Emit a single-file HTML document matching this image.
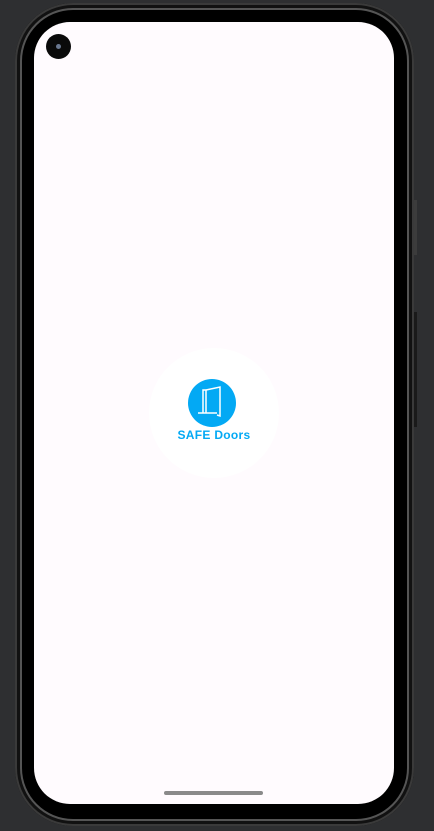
<!DOCTYPE html>
<html><head><meta charset="utf-8"><style>
html,body{margin:0;padding:0;width:434px;height:831px;overflow:hidden;background:#2e2f31;}
.frame{position:absolute;left:15px;top:3px;width:399px;height:823px;border-radius:58px;background:#000;box-shadow:inset 0 0 0 2px #3a3a3a, inset 0 0 0 5px #111, inset 0 0 0 7px #555, inset 0 0 0 9px #000;}
.screen{position:absolute;left:34px;top:22px;width:360px;height:782px;border-radius:36px;background:#fffbfe;overflow:hidden;}
.cam{position:absolute;left:46px;top:34px;width:25px;height:25px;border-radius:50%;background:#0a0a0a;}
.cam i{position:absolute;left:10px;top:10px;width:5px;height:5px;border-radius:50%;background:#6a7890;}
.btn{position:absolute;background:#222;}
.halo{position:absolute;left:149px;top:348px;width:130px;height:130px;border-radius:50%;background:#fff;}
.logo{position:absolute;left:188px;top:379px;width:48px;height:48px;border-radius:50%;background:#03a9f4;}
.txt{position:absolute;left:150px;top:428px;width:128px;text-align:center;font:bold 12px "Liberation Sans",sans-serif;color:#03a9f4;letter-spacing:0.3px;}
.bar{position:absolute;left:164px;top:791px;width:99px;height:4px;border-radius:2px;background:#8a8a8a;}
</style></head><body>
<div class="frame"></div>
<div class="btn" style="left:414px;top:200px;width:3px;height:55px;background:#3c3c3c"></div>
<div class="btn" style="left:414px;top:312px;width:3px;height:115px;background:#1a1a1a"></div>
<div class="screen"></div>
<div class="cam"><i></i></div>
<div class="halo"></div>
<div class="logo"><svg width="48" height="48" viewBox="0 0 48 48"><g fill="none" stroke="#fff" stroke-width="1.5"><path d="M15 34V11h3"/><path d="M18 11l14-3v29l-3-1"/><path d="M18 11v23"/><path d="M10 34h19"/></g></svg></div>
<div class="txt">SAFE Doors</div>
<div class="bar"></div>
</body></html>
